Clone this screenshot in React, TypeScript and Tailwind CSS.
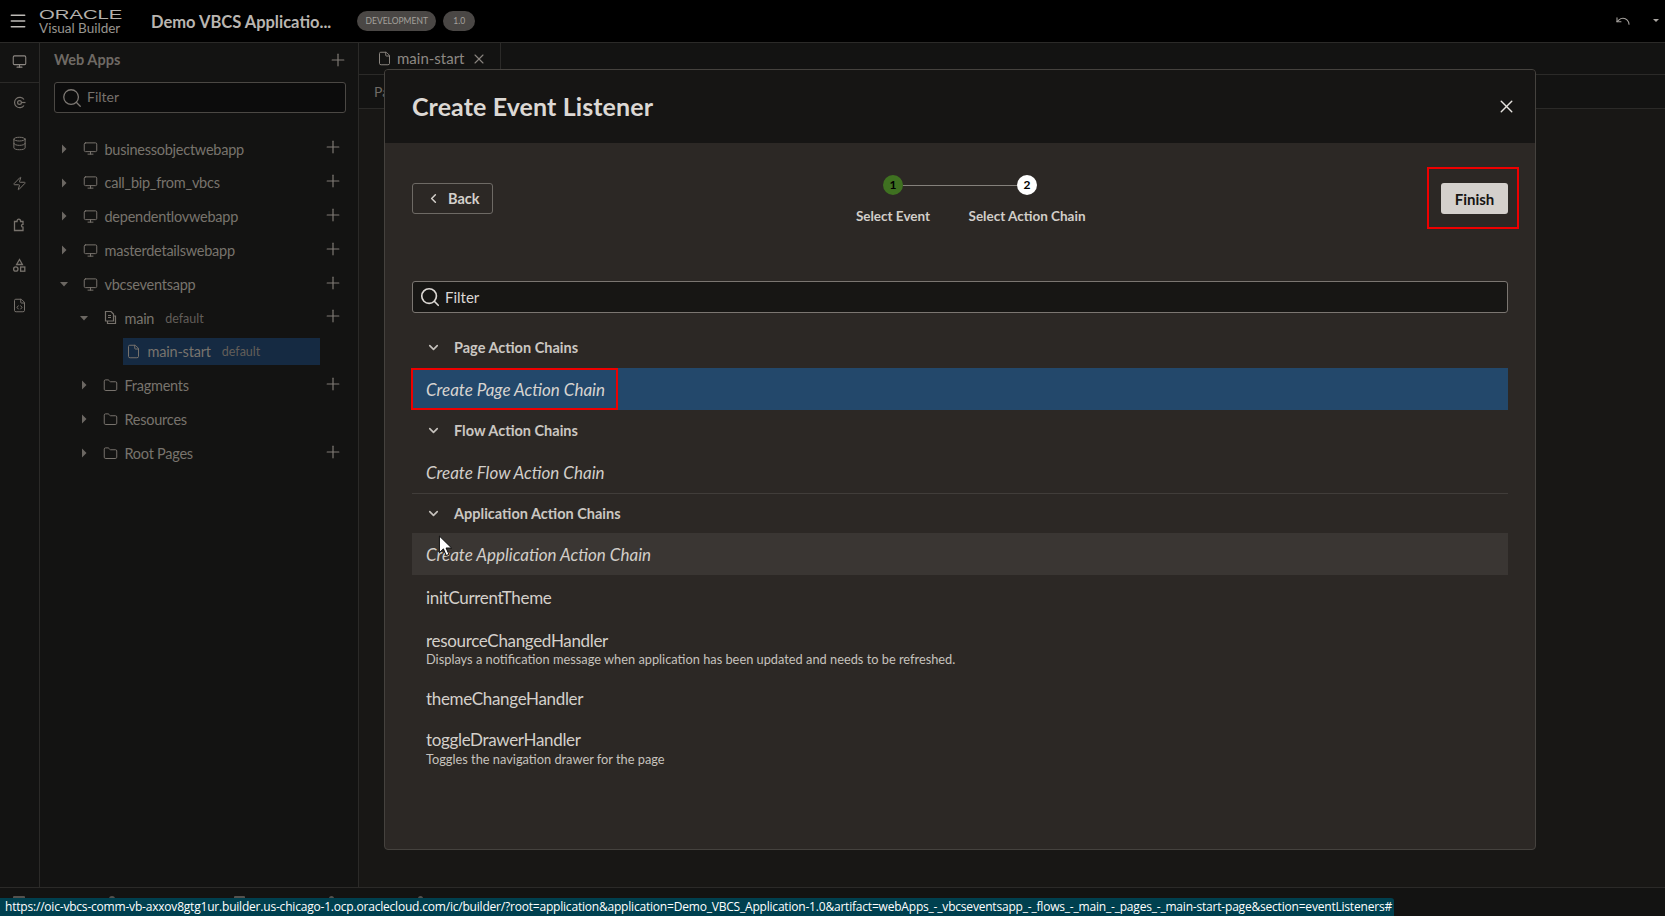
import { ChevronDown, ChevronLeft, Database, File, FileCode, Folder, Menu, Monitor, Plus, Search, Undo, X, Zap } from 'lucide-react'

const font = "font-['Lato','Noto_Sans',sans-serif]"

function Caret({ open }: { open?: boolean }) {
  return (
    <svg width="10" height="10" viewBox="0 0 10 10" className="text-[#6b6762]">
      {open ? <path d="M1 3h8L5 7.5z" fill="currentColor" /> : <path d="M3 .5v9L7.5 5z" fill="currentColor" />}
    </svg>
  )
}

function FlowIcon() {
  return (
    <svg width="15" height="15" viewBox="0 0 15 15" fill="none" stroke="currentColor" strokeWidth="1.2" className="text-[#77726c]">
      <path d="M2.5 1.5h5.5l2.5 2.5v7h-8z" />
      <path d="M5 5.5h3M5 7.5h3M10.5 6h2v7.5h-8v-2.5" />
    </svg>
  )
}

type Row = { name: string; tag?: string; level: 0 | 1; open?: boolean; plus?: boolean; kind: 'app' | 'flow' | 'folder' }

const rows: Row[] = [
  { name: 'businessobjectwebapp', level: 0, plus: true, kind: 'app' },
  { name: 'call_bip_from_vbcs', level: 0, plus: true, kind: 'app' },
  { name: 'dependentlovwebapp', level: 0, plus: true, kind: 'app' },
  { name: 'masterdetailswebapp', level: 0, plus: true, kind: 'app' },
  { name: 'vbcseventsapp', level: 0, open: true, plus: true, kind: 'app' },
  { name: 'main', tag: 'default', level: 1, open: true, plus: true, kind: 'flow' },
]

const after: Row[] = [
  { name: 'Fragments', level: 1, plus: true, kind: 'folder' },
  { name: 'Resources', level: 1, kind: 'folder' },
  { name: 'Root Pages', level: 1, plus: true, kind: 'folder' },
]

function TreeRow({ row }: { row: Row }) {
  return (
    <div className={`flex h-[33.8px] items-center ${row.level === 0 ? 'pl-[19px]' : 'pl-[39px]'}`}>
      <Caret open={row.open} />
      <span className="ml-[14px] flex">
        {row.kind === 'app' && <Monitor size={15} strokeWidth={1.6} className="text-[#77726c]" />}
        {row.kind === 'flow' && <FlowIcon />}
        {row.kind === 'folder' && <Folder size={15} strokeWidth={1.6} className="text-[#77726c]" />}
      </span>
      <span className="ml-[6.5px] pt-[1px] text-[14.5px] tracking-[-0.25px] text-[#78736d]">{row.name}</span>
      {row.tag && <span className="ml-[11px] pt-[2px] text-[12.5px] text-[#625e59]">{row.tag}</span>}
      {row.plus && <Plus size={20} strokeWidth={1.4} className="absolute left-[283px] -mt-[3px] text-[#807b75]" />}
    </div>
  )
}

function SectionHead({ label, tall = true }: { label: string; tall?: boolean }) {
  return (
    <div className={`flex items-center pl-[14px] ${tall ? 'h-[41px]' : 'h-[39px]'}`}>
      <ChevronDown size={15} strokeWidth={2.6} className="text-[#c6c2bd]" />
      <span className="ml-[13px] text-[14.5px] font-bold text-[#cbc7c2]">{label}</span>
    </div>
  )
}

export default function App() {
  return (
    <div className={`relative flex h-[916px] w-[1665px] flex-col overflow-hidden bg-[#131312] ${font}`}>
      {/* top bar */}
      <header className="flex h-[43px] shrink-0 items-center border-b border-[#2b2a28] bg-black">
        <Menu size={20} strokeWidth={1.8} className="ml-[8px] text-[#bdbab6]" />
        <div className="ml-[11px] flex w-[112px] flex-col leading-none">
          <span className="origin-left scale-x-[1.56] font-['Liberation_Sans',sans-serif] text-[13px] leading-[13px] text-[#b4b1ad]">ORACLE</span>
          <span className="text-[13.5px] leading-[14px] text-[#98958f]">Visual Builder</span>
        </div>
        <span className="mt-[3px] text-[16.5px] font-bold text-[#b9b5b0]">Demo VBCS Applicatio...</span>
        <span className="ml-[26px] flex h-[20px] w-[79px] items-center justify-center rounded-full bg-[#4a4745] text-[8.5px] text-[#a5a19c]">DEVELOPMENT</span>
        <span className="ml-[7px] flex h-[20px] w-[32px] items-center justify-center rounded-full bg-[#4a4745] text-[8.5px] text-[#a5a19c]">1.0</span>
        <Undo size={16} strokeWidth={1.6} className="ml-auto text-[#a8a4a0]" />
        <svg width="8" height="6" viewBox="0 0 8 6" className="mr-[5px] ml-[21px] text-[#aaa6a2]"><path d="M1 1h6L4 4z" fill="currentColor" /></svg>
      </header>

      <div className="flex min-h-0 flex-1">
        {/* icon rail */}
        <nav className="flex w-[40px] shrink-0 flex-col items-center border-r border-[#2b2a28] text-[#77726c]">
          <div className="flex h-[40px] w-full items-center justify-center border-b border-[#2b2a28] pb-[3px] text-[#8d8883]">
            <Monitor size={15} strokeWidth={1.7} />
          </div>
          <div className="flex flex-col items-center gap-[25.7px] pt-[12px]">
            <svg width="15" height="15" viewBox="0 0 15 15" fill="none" stroke="currentColor" strokeWidth="1.2"><path d="M12 4.5A5.2 5.2 0 1 0 12 10.5" /><circle cx="7.5" cy="7.5" r="1.9" /><path d="M9.5 7.5h4" /></svg>
            <Database size={15} strokeWidth={1.6} />
            <Zap size={15} strokeWidth={1.6} />
            <svg width="15" height="15" viewBox="0 0 15 15" fill="none" stroke="currentColor" strokeWidth="1.3"><path d="M2.5 13.5V4.5H5c0-3.2 3.6-3.2 3.6 0H11v2.8c-2.1 0-2.1 2.8 0 2.8v3.4z" /></svg>
            <svg width="15" height="15" viewBox="0 0 15 15" fill="none" stroke="currentColor" strokeWidth="1.3"><path d="M7.5 1.5L10.4 6.5H4.6z" /><circle cx="3.8" cy="11" r="2.2" /><rect x="8.6" y="9" width="4.2" height="4.2" /></svg>
            <FileCode size={15} strokeWidth={1.6} />
          </div>
        </nav>

        {/* web apps panel */}
        <aside className="relative w-[319px] shrink-0 border-r border-[#2b2a28] pl-[14px]">
          <div className="flex h-[36px] items-center pb-[2px]">
            <span className="text-[14.5px] font-bold text-[#6f6a65]">Web Apps</span>
            <Plus size={20} strokeWidth={1.4} className="absolute left-[288px] text-[#807b75]" />
          </div>
          <div className="mt-[3px] flex h-[31px] w-[292px] items-center rounded-[3px] border border-[#4b4844] bg-[#0c0c0c] pl-[6px]">
            <Search size={22} strokeWidth={1.4} className="text-[#7d7873]" />
            <span className="ml-[4px] pb-[2px] text-[14px] text-[#77726c]">Filter</span>
          </div>
          <div className="-ml-[14px] pt-[19px]">
            {rows.map(r => <TreeRow key={r.name} row={r} />)}
            <div className="my-[3.4px] ml-[83px] flex h-[27px] w-[197px] items-center bg-[#152a42] pl-[2.5px]">
              <File size={15} strokeWidth={1.6} className="text-[#77726c]" />
              <span className="ml-[7px] pt-[1px] text-[14.5px] tracking-[-0.2px] text-[#78736d]">main-start</span>
              <span className="ml-[11px] pt-[2px] text-[12.5px] text-[#625e59]">default</span>
            </div>
            {after.map(r => <TreeRow key={r.name} row={r} />)}
          </div>
        </aside>

        {/* page editor behind the dialog */}
        <main className="relative min-w-0 flex-1 bg-[#181715]">
          <div className="flex h-[32px] border-b border-[#2b2a28] bg-[#131312]">
            <div className="flex w-[142px] items-center border-r border-[#2b2a28] pl-[18px] text-[#8a857f]">
              <File size={15} strokeWidth={1.6} />
              <span className="ml-[5px] text-[15px] text-[#8d8883]">main-start</span>
              <X size={16} strokeWidth={1.6} className="ml-[6px]" />
            </div>
          </div>
          <div className="flex h-[34px] items-center border-b border-[#2b2a28] bg-[#131312] pl-[15px] text-[14px] text-[#6f6a65]">Page</div>
        </main>
      </div>

      {/* bottom tabs, mostly under the link preview */}
      <footer className="flex h-[29px] shrink-0 gap-[84px] overflow-hidden border-t border-[#2b2a28] bg-[#131312] pt-[8px] pl-[13px]">
        <span className="h-[8px] w-[12px] rounded-[1px] bg-[#55524e]" />
        <span className="h-[8px] w-[6px] rounded-full bg-[#55524e]" />
        <span className="ml-[35px] h-[8px] w-[11px] rounded-[1px] bg-[#55524e]" />
        <span className="h-[8px] w-[5px] rounded-full bg-[#55524e]" />
        <span className="h-[8px] w-[5px] rounded-full bg-[#55524e]" />
      </footer>

      {/* dialog */}
      <section className="absolute top-[69px] left-[384px] flex h-[781px] w-[1152px] flex-col overflow-hidden rounded-[4px] border border-[#45423e] bg-[#2c2825]">
        <div className="flex h-[73px] shrink-0 items-center justify-between bg-[#161514] pr-[18px] pl-[27px]">
          <h1 className="text-[25px] font-bold tracking-[0.1px] text-[#dcd8d4]">Create Event Listener</h1>
          <X size={21} strokeWidth={1.6} className="text-[#e6e3df]" />
        </div>
        <div className="flex min-h-0 flex-1 flex-col px-[27px]">
          <div className="grid h-[138px] shrink-0 grid-cols-[1fr_auto_1fr] items-start pt-[32px]">
            <button className="mt-[8px] flex h-[31px] w-[81px] items-center rounded-[3px] border border-[#6e6a65] pl-[13px] text-[#d4d0cb]">
              <ChevronLeft size={15} strokeWidth={2.4} />
              <span className="ml-[7px] pt-[1px] text-[14.5px] font-bold">Back</span>
            </button>
            {/* stepper */}
            <div className="flex w-[268px] flex-col">
              <div className="flex items-center px-[57px]">
                <span className="flex h-[20px] w-[20px] items-center justify-center rounded-full bg-[#3f7121] text-[12px] font-bold text-black">1</span>
                <span className="h-px w-[114px] bg-[#85817c]" />
                <span className="flex h-[20px] w-[20px] items-center justify-center rounded-full bg-white text-[12px] font-bold text-black">2</span>
              </div>
              <div className="mt-[11px] flex text-[13.5px] font-bold text-[#d2cec9]">
                <span className="w-[134px] text-center">Select Event</span>
                <span className="w-[134px] text-center">Select Action Chain</span>
              </div>
            </div>
            <button className="mt-[8px] h-[31px] w-[67px] justify-self-end rounded-[3px] bg-[#d4d0cc] pt-[1px] text-[15px] font-bold text-[#161513]">Finish</button>
          </div>

          <div className="flex h-[32px] shrink-0 items-center rounded-[3px] border border-[#7b7671] bg-[#171614] pl-[6px] text-[#dcd8d4]">
            <Search size={22} strokeWidth={1.8} />
            <span className="ml-[4px] text-[15px]">Filter</span>
          </div>

          <div className="mt-[14px]">
            <SectionHead label="Page Action Chains" />
            <div className="flex h-[42px] items-center bg-[#23486b] pt-[2px] pl-[14px] text-[17px] text-[#d8d4d0] italic">Create Page Action Chain</div>
            <SectionHead label="Flow Action Chains" />
            <div className="flex h-[43px] items-center border-b border-[#413d3a] pt-[1px] pl-[14px] text-[17px] text-[#d2cec9] italic">Create Flow Action Chain</div>
            <SectionHead label="Application Action Chains" tall={false} />
            <div className="flex h-[42px] items-center bg-[#3a3633] pt-[2px] pl-[14px] text-[17px] text-[#d2cec9] italic">Create Application Action Chain</div>
            <div className="flex h-[44px] items-center pt-[1px] pl-[14px] text-[17px] tracking-[-0.33px] text-[#d4d0cb]">initCurrentTheme</div>
            <div className="flex h-[58px] flex-col justify-center pt-[1px] pl-[14px]">
              <span className="text-[17px] leading-[20px] tracking-[-0.33px] text-[#d4d0cb]">resourceChangedHandler</span>
              <span className="text-[12.8px] leading-[16px] text-[#c6c2bd]">Displays a notification message when application has been updated and needs to be refreshed.</span>
            </div>
            <div className="flex h-[42px] items-center pt-[1px] pl-[14px] text-[17px] tracking-[-0.33px] text-[#d4d0cb]">themeChangeHandler</div>
            <div className="flex h-[58px] flex-col justify-center pt-[1px] pl-[14px]">
              <span className="text-[17px] leading-[20px] tracking-[-0.33px] text-[#d4d0cb]">toggleDrawerHandler</span>
              <span className="mt-[1px] text-[12.8px] leading-[16px] text-[#c6c2bd]">Toggles the navigation drawer for the page</span>
            </div>
          </div>
        </div>
      </section>

      {/* red annotation boxes */}
      <div className="absolute top-[167px] left-[1427px] h-[62px] w-[92px] border-2 border-[#ee0000]" />
      <div className="absolute top-[368px] left-[411px] h-[42px] w-[207px] border-2 border-[#ee0000]" />

      {/* mouse pointer */}
      <svg width="15" height="22" viewBox="0 0 13 20" className="absolute top-[535px] left-[438px]">
        <path d="M1 1v15l3.6-3.4 2.6 6 2.4-1-2.6-5.8h5z" fill="#fff" stroke="#000" strokeWidth="0.8" />
      </svg>

      {/* link preview */}
      <div className="absolute bottom-0 left-0 flex h-[18px] w-[1394px] items-center rounded-tr-[3px] bg-[#00404f] pl-[5px] font-['Open_Sans',sans-serif] text-[12px] tracking-[-0.2px] whitespace-nowrap text-white">
        https://oic-vbcs-comm-vb-axxov8gtg1ur.builder.us-chicago-1.ocp.oraclecloud.com/ic/builder/?root=application&amp;application=Demo_VBCS_Application-1.0&amp;artifact=webApps_-_vbcseventsapp_-_flows_-_main_-_pages_-_main-start-page&amp;section=eventListeners#
      </div>
    </div>
  )
}
